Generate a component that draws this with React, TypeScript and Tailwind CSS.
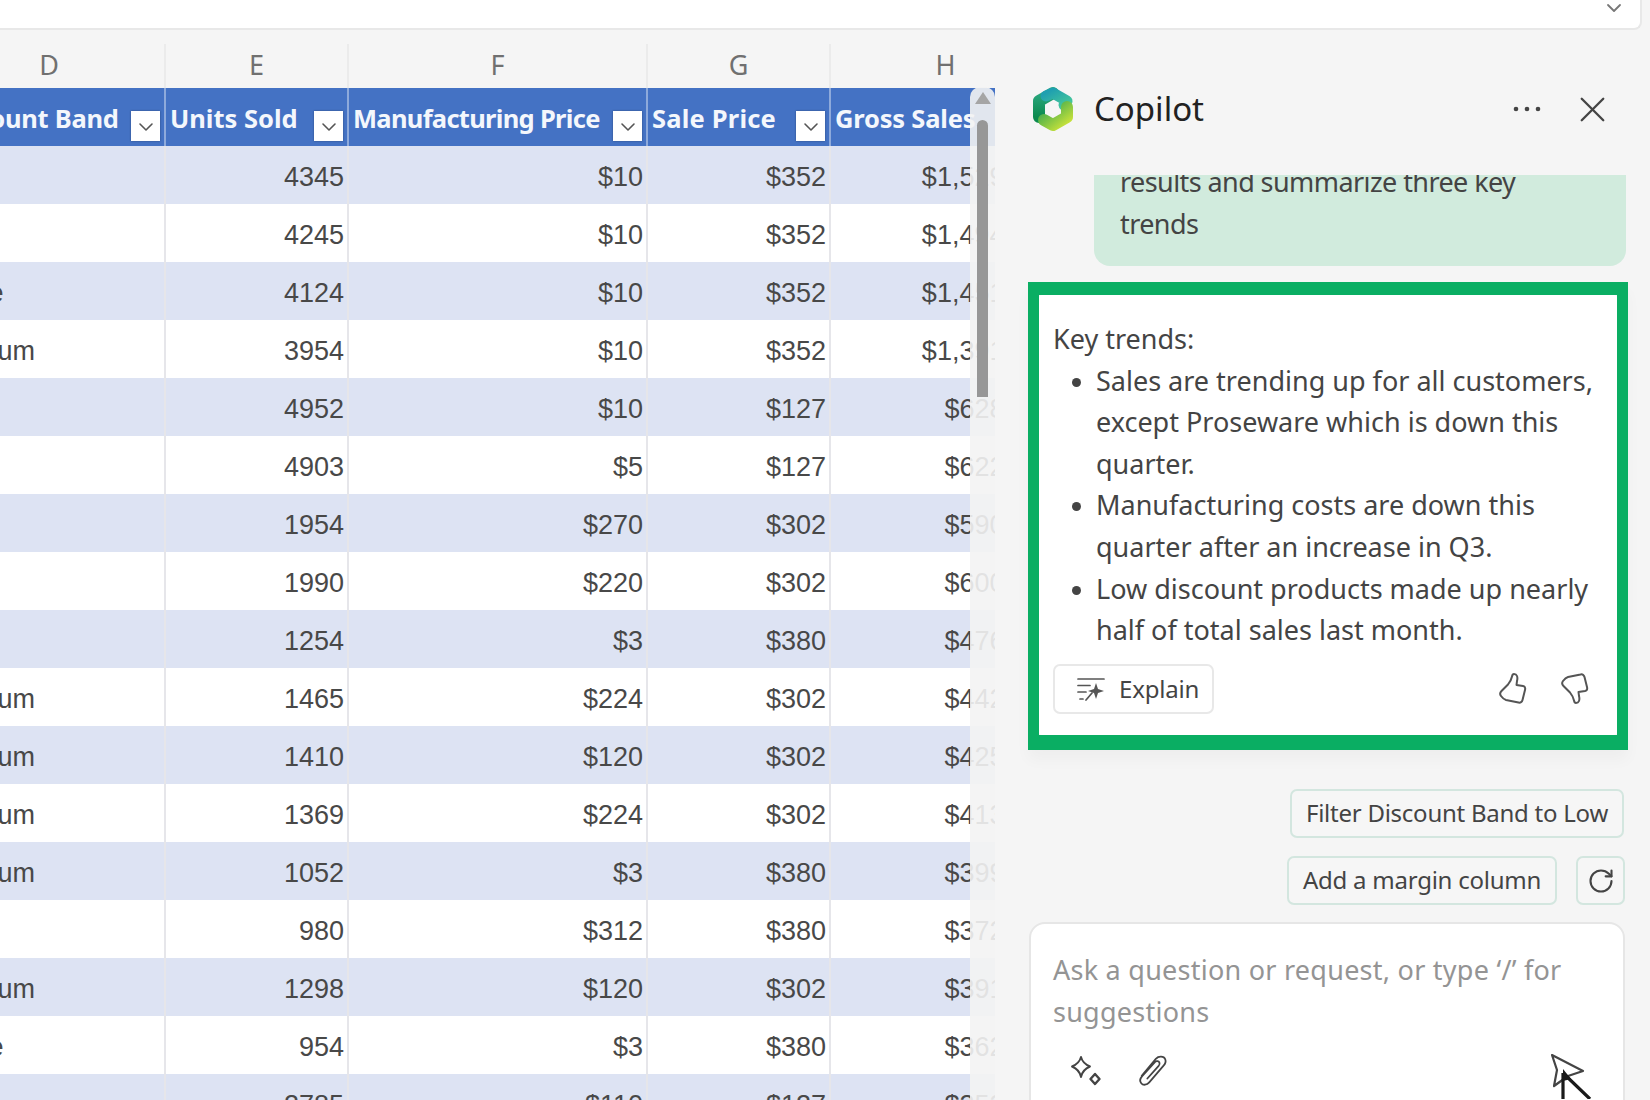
import React from "react";
import { RotateCw, X, ChevronDown } from "lucide-react";

const cols = [
  { label: "D", head: "Discount Band", w: "w-[232px]", filter: true, track: "tracking-[-0.25px]" },
  { label: "E", head: "Units Sold", w: "w-[183px]", filter: true, track: "tracking-[0px]" },
  { label: "F", head: "Manufacturing Price", w: "w-[299px]", filter: true, track: "tracking-[-0.7px]" },
  { label: "G", head: "Sale Price", w: "w-[183px]", filter: true, track: "tracking-[0.2px]" },
  { label: "H", head: "Gross Sales", w: "w-[231px]", filter: false, track: "tracking-[-0.2px]" },
];

const rows = [
  ["High", "4345", "$10", "$352", "$1,529,440"],
  ["High", "4245", "$10", "$352", "$1,494,240"],
  ["None", "4124", "$10", "$352", "$1,451,648"],
  ["Medium", "3954", "$10", "$352", "$1,391,808"],
  ["High", "4952", "$10", "$127", "$628,904"],
  ["High", "4903", "$5", "$127", "$622,681"],
  ["High", "1954", "$270", "$302", "$590,108"],
  ["High", "1990", "$220", "$302", "$600,980"],
  ["High", "1254", "$3", "$380", "$476,520"],
  ["Medium", "1465", "$224", "$302", "$442,430"],
  ["Medium", "1410", "$120", "$302", "$425,820"],
  ["Medium", "1369", "$224", "$302", "$413,438"],
  ["Medium", "1052", "$3", "$380", "$399,760"],
  ["High", "980", "$312", "$380", "$372,400"],
  ["Medium", "1298", "$120", "$302", "$391,996"],
  ["None", "954", "$3", "$380", "$362,520"],
  ["High", "2785", "$110", "$127", "$353,695"],
];

function FilterBtn() {
  return (
    <span className="absolute right-[4px] bottom-[5px] flex h-[30px] w-[29px] items-center justify-center bg-white shadow-[0_0_2px_rgba(0,0,0,0.35)]">
      <ChevronDown size={24} strokeWidth={1.6} className="text-[#555] mt-[2px]" />
    </span>
  );
}

function Logo() {
  return (
    <svg width="46" height="48" viewBox="0 0 46 48">
      <defs>
        <linearGradient id="lg1" x1="0" y1="0" x2="1" y2="1">
          <stop offset="0" stopColor="#1f9fb0" />
          <stop offset="1" stopColor="#45c79a" />
        </linearGradient>
        <linearGradient id="lg2" x1="0" y1="0" x2="0" y2="1">
          <stop offset="0" stopColor="#2aa77f" />
          <stop offset="1" stopColor="#0c8a4e" />
        </linearGradient>
        <linearGradient id="lg3" x1="0" y1="0" x2="1" y2="1">
          <stop offset="0" stopColor="#3aa84f" />
          <stop offset="1" stopColor="#c9e23a" />
        </linearGradient>
      </defs>
      <path d="M9 32 L9 16 L23 8" fill="none" stroke="url(#lg2)" strokeWidth="12" strokeLinejoin="round" strokeLinecap="round" />
      <path d="M16 11 L23 8 L37 16 L34 20" fill="none" stroke="url(#lg1)" strokeWidth="11" strokeLinejoin="round" strokeLinecap="round" />
      <path d="M37 22 L37 32 L23 40 L14 35" fill="none" stroke="url(#lg3)" strokeWidth="12" strokeLinejoin="round" strokeLinecap="round" />
      <circle cx="23.5" cy="24" r="5.5" fill="#f5f5f5" />
    </svg>
  );
}

function ExplainIcon() {
  return (
    <svg width="28" height="26" viewBox="0 0 28 26" fill="none" stroke="#555" strokeWidth="1.7" strokeLinecap="round">
      <path d="M1 3 H27" />
      <path d="M1 9.5 H13" />
      <path d="M1 16 H9" />
      <path d="M3 23 H6" />
      <path d="M9 24 L15 17" />
      <path d="M19 7 L21 13 L27 15 L21 17 L19 23 L17 17 L11 15 L17 13 Z" fill="#555" stroke="none" />
    </svg>
  );
}

const thumb =
  "M16 2 C19 2 20 5 19 9 L18.5 13 L25 14 C27 14.5 27.5 16 27 18 L24.5 28 C24 30 22.5 31 20.5 30.5 L8 28 C6 27.5 4.5 26 3 24 C1.5 22 2 20.5 3.5 19 L10 12.5 C12 10 13.5 7 14 4.5 C14.3 3 15 2 16 2 Z";

function ThumbUp() {
  return (
    <svg width="30" height="34" viewBox="0 0 30 34" fill="none" stroke="#555" strokeWidth="2" strokeLinejoin="round">
      <path d={thumb} />
    </svg>
  );
}

function ThumbDown() {
  return (
    <svg width="30" height="34" viewBox="0 0 30 34" fill="none" stroke="#555" strokeWidth="2" strokeLinejoin="round">
      <path d={thumb} transform="matrix(1 0 0 -1 0 33)" />
    </svg>
  );
}

function SparkleIcon() {
  return (
    <svg width="34" height="34" viewBox="0 0 34 34" fill="none" stroke="#444" strokeWidth="1.9" strokeLinejoin="round">
      <path d="M12 3 C13 7 15 10 21 12.5 C15 15 13 18 12 23 C11 18 9 15 3 12.5 C9 10 11 7 12 3 Z" />
      <path d="M26 20 L30.5 25 L26 30 L21.5 25 Z" strokeWidth="2.4" />
    </svg>
  );
}

function ClipIcon() {
  return (
    <svg width="32" height="34" viewBox="0 0 34 36" fill="none" stroke="#444" strokeWidth="1.9" strokeLinecap="round">
      <path d="M5 23 L20 5 C23 1.8 28.5 2 30 5.5 C31 8 30 10.5 28 12.5 L13 30 C10.5 33 6.5 33.5 4.5 31 C2.8 29 3.3 26 5.5 23.5 L19 8.5 C20.5 7 23 7.5 23.8 9 C24.4 10.3 24 11.5 23 12.5 L11 26" />
    </svg>
  );
}

function SendWithCursor() {
  return (
    <svg width="60" height="50" viewBox="0 0 60 50" fill="none" className="absolute right-[17px] top-[125px]">
      <path d="M6 6 L37 22 L22 27 L8 37 L11 21 Z" fill="#fff" stroke="#444" strokeWidth="2.2" strokeLinejoin="round" />
      <path d="M17 24 L17 50 M17 24 L44 50" stroke="#1a1a1a" strokeWidth="3.2" />
      <path d="M17 20 L25 30 L17 32 Z" fill="#1a1a1a" />
    </svg>
  );
}

function Chip({ children }: { children: React.ReactNode }) {
  return (
    <div className="flex h-[49px] items-center rounded-[7px] border-2 border-[#d3e6df] bg-[#f6f6f6] px-[14px] pb-[2px] text-[#444]">
      {children}
    </div>
  );
}

export default function App() {
  return (
    <div
      className="flex h-[1100px] w-[1650px] flex-col overflow-hidden bg-[#f5f5f5]"
      style={{ fontFamily: '"Noto Sans", "Open Sans", sans-serif' }}
    >
      <div className="mr-[8px] flex h-[30px] shrink-0 items-start justify-end rounded-br-[8px] border-b-2 border-r-2 border-[#e8e8e8] bg-white pr-[14px]">
        <ChevronDown size={24} strokeWidth={1.8} className="-mt-[4px] text-[#777]" />
      </div>

      <div className="flex min-h-0 flex-1">
        {/* Sheet */}
        <div className="relative w-[995px] shrink-0 overflow-hidden">
          <div className="-ml-[66px] w-[1128px]">
            <div className="mt-[14px] flex h-[44px] text-[27px] leading-[38px] text-[#707070]">
              {cols.map((c) => (
                <div key={c.label} className={`${c.w} shrink-0 border-r-2 border-[#ebebeb] pt-[2px] text-center`}>
                  {c.label}
                </div>
              ))}
            </div>
            <div className="flex h-[58px] bg-[#4472c4] text-[25.5px] font-bold leading-[60px] text-[#f4f7fc]">
              {cols.map((c) => (
                <div key={c.label} className={`${c.w} ${c.track} relative shrink-0 overflow-hidden whitespace-nowrap border-r-2 border-[#8eaadb] pl-[4px]`}>
                  {c.head}
                  {c.filter && <FilterBtn />}
                </div>
              ))}
            </div>
            {rows.map((r, i) => (
              <div
                key={i}
                className={`flex h-[58px] text-[27px] leading-[62px] text-[#484848] ${i % 2 === 0 ? "bg-[#dde3f3]" : "bg-white"}`}
                style={{ fontFamily: '"Liberation Sans", Arial, sans-serif' }}
              >
                {r.map((v, j) => (
                  <div
                    key={j}
                    className={`${cols[j].w} shrink-0 whitespace-nowrap border-r-2 border-[#e6e6ea] ${j === 0 ? "pl-[5px] text-left" : "pr-[3px] text-right"}`}
                  >
                    {v}
                  </div>
                ))}
              </div>
            ))}
          </div>
          {/* scrollbar */}
          <div className="absolute bottom-0 right-0 top-[57px] w-[25px] rounded-t-[10px] bg-[#f3f3f3]/90">
            <div className="mx-auto mt-[5px] h-0 w-0 border-x-[8px] border-b-[12px] border-x-transparent border-b-[#a5a5a5]" />
            <div className="mx-auto mt-[16px] h-[277px] w-[11px] rounded-t-[6px] bg-[#979797]" />
          </div>
        </div>

        {/* Copilot panel */}
        <div className="w-[655px] shrink-0 pl-[33px] pr-[22px] text-[27px] leading-[41.6px] text-[#444]">
          <div className="flex h-[145px] items-center pt-[13px]">
            <div className="ml-[2px] flex">
              <Logo />
            </div>
            <div className="ml-[18px] text-[33px] text-[#222]">Copilot</div>
            <svg width="32" height="8" viewBox="0 0 32 8" className="ml-auto">
              <circle cx="5" cy="4" r="2.3" fill="#444" />
              <circle cx="16" cy="4" r="2.3" fill="#444" />
              <circle cx="27" cy="4" r="2.3" fill="#444" />
            </svg>
            <X size={43} strokeWidth={1.3} className="ml-[28px] mr-[14px] text-[#444]" />
          </div>

          <div className="ml-[66px] mr-[2px] h-[91px] overflow-hidden rounded-b-[16px] bg-[#d1ebdd] pl-[26px] tracking-[-0.58px]">
            <div className="-mt-[14px]">results and summarize three key</div>
            <div>trends</div>
          </div>

          <div className="mt-[16px] h-[468px] border-x-[11px] border-b-[15px] border-t-[13px] border-[#0aae63] shadow-[0_10px_14px_rgba(0,0,0,0.03)]">
            <div className="h-full rounded-[3px] bg-white pl-[14px] pr-[14px] pt-[23px]">
              <div>Key trends:</div>
              <ul className="list-disc pl-[43px] marker:text-[24px]">
                <li>Sales are trending up for all customers, except Proseware which is down this quarter.</li>
                <li>Manufacturing costs are down this quarter after an increase in Q3.</li>
                <li>Low discount products made up nearly half of total sales last month.</li>
              </ul>
              <div className="mt-[13px] flex items-center">
                <div className="flex h-[50px] w-[161px] items-center gap-[14px] rounded-[7px] border-2 border-[#e8e8e8] pl-[22px] text-[24px] tracking-[-0.2px]">
                  <ExplainIcon />
                  <span>Explain</span>
                </div>
                <div className="ml-auto mr-[13px] flex gap-[32px]">
                  <ThumbUp />
                  <ThumbDown />
                </div>
              </div>
            </div>
          </div>

          <div className="mr-[3px] mt-[39px] flex flex-col items-end gap-[18px] text-[24px] tracking-[-0.25px]">
            <div className="mr-[1px]">
              <Chip>Filter Discount Band to Low</Chip>
            </div>
            <div className="flex gap-[19px]">
              <Chip>Add a margin column</Chip>
              <div className="flex h-[49px] w-[49px] items-center justify-center rounded-[7px] border-2 border-[#d3e6df] bg-[#f6f6f6]">
                <RotateCw size={28} strokeWidth={1.8} className="text-[#444]" />
              </div>
            </div>
          </div>

          <div className="relative mb-0 ml-[1px] mr-[3px] mt-[17px] h-[200px] rounded-t-[16px] border-2 border-[#e6e6e6] bg-white pl-[22px] pr-[40px] pt-[25px] tracking-[0.25px] text-[#949494]">
            <div>Ask a question or request, or type ‘/’ for suggestions</div>
            <div className="mt-[22px] flex items-center gap-[34px] pl-[16px]">
              <SparkleIcon />
              <ClipIcon />
            </div>
            <SendWithCursor />
          </div>
        </div>
      </div>
    </div>
  );
}
